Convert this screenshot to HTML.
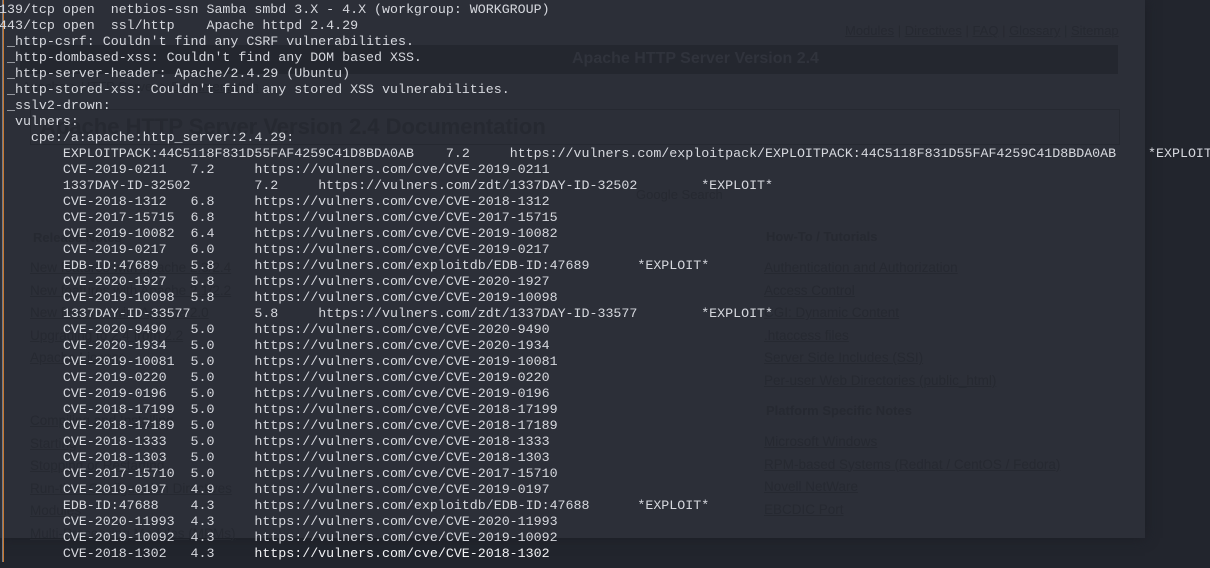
<!DOCTYPE html>
<html><head><meta charset="utf-8"><style>
html,body{margin:0;padding:0;width:1210px;height:568px;overflow:hidden;background:#22252d;font-family:"Liberation Sans",sans-serif}
.win{position:absolute;left:0;top:0;width:1145px;height:538px;background:#2c2f38;box-shadow:0 0 12px #1c1e25}
.bg{position:absolute;color:#262931;white-space:nowrap}
.bg u{text-decoration:underline}
.hdr{position:absolute;left:20px;top:45px;width:1098px;height:29px;background:#24272f}
.box{position:absolute;left:30px;top:109px;width:1088px;height:34px;border:1px solid #262931}
.lbar1{position:absolute;left:2px;top:0;width:1px;height:562px;background:#7a7c82}
.lbar2{position:absolute;left:3px;top:0;width:1px;height:562px;background:#c8772e}
pre{position:absolute;left:-1px;top:2px;margin:0;font-family:"Liberation Mono",monospace;font-size:13.3px;line-height:16px;color:#d6d8de;tab-size:8;-moz-tab-size:8;white-space:pre}
.b{color:#f2f3f5}
</style></head><body>
<div class="win"></div>
<div class="hdr"></div>
<div class="bg" style="left:572px;top:50px;font-size:16px;font-weight:bold;color:#30333c">Apache HTTP Server Version 2.4</div>
<div class="bg" style="left:845px;top:23px;font-size:13px"><u>Modules</u> | <u>Directives</u> | <u>FAQ</u> | <u>Glossary</u> | <u>Sitemap</u></div>
<div class="bg" style="left:22px;top:79px;font-size:13px">Apache &gt; HTTP Server &gt; <u>Documentation</u></div>
<div class="box"></div>
<div class="bg" style="left:40px;top:114px;font-size:22px;font-weight:bold">Apache HTTP Server Version 2.4 Documentation</div>
<div class="bg" style="left:636px;top:187px;font-size:13px">Google Search</div>
<div class="bg" style="left:33px;top:230px;font-size:13px;font-weight:bold">Release Notes</div>
<div class="bg" style="left:766px;top:229px;font-size:13px;font-weight:bold">How-To / Tutorials</div>
<div class="bg" style="left:30px;top:257px;font-size:13.5px;line-height:22.5px"><u>New features with Apache 2.3/2.4</u><br><u>New features with Apache 2.1/2.2</u><br><u>New features with Apache 2.0</u><br><u>Upgrading to 2.4 from 2.2</u><br><u>Apache License</u></div>
<div class="bg" style="left:764px;top:257px;font-size:13.5px;line-height:22.5px"><u>Authentication and Authorization</u><br><u>Access Control</u><br><u>CGI: Dynamic Content</u><br><u>.htaccess files</u><br><u>Server Side Includes (SSI)</u><br><u>Per-user Web Directories (public_html)</u></div>
<div class="bg" style="left:766px;top:403px;font-size:13px;font-weight:bold">Platform Specific Notes</div>
<div class="bg" style="left:764px;top:431px;font-size:13.5px;line-height:22.5px"><u>Microsoft Windows</u><br><u>RPM-based Systems (Redhat / CentOS / Fedora)</u><br><u>Novell NetWare</u><br><u>EBCDIC Port</u></div>
<div class="bg" style="left:30px;top:410px;font-size:13.5px;line-height:22.5px"><u>Compiling and Installing</u><br><u>Starting</u><br><u>Stopping or Restarting</u><br><u>Run-time Configuration Directives</u><br><u>Modules</u><br><u>Multi-Processing Modules (MPMs)</u></div>
<div class="lbar1"></div><div class="lbar2"></div>
<pre>139/tcp open  netbios-ssn Samba smbd 3.X - 4.X (workgroup: WORKGROUP)
443/tcp open  ssl/http    Apache httpd 2.4.29
 _http-csrf: Couldn't find any CSRF vulnerabilities.
 _http-dombased-xss: Couldn't find any DOM based XSS.
 _http-server-header: Apache/2.4.29 (Ubuntu)
 _http-stored-xss: Couldn't find any stored XSS vulnerabilities.
 _sslv2-drown: 
  vulners: 
    cpe:/a:apache:http_server:2.4.29: 
        EXPLOITPACK:44C5118F831D55FAF4259C41D8BDA0AB	7.2	https://vulners.com/exploitpack/EXPLOITPACK:44C5118F831D55FAF4259C41D8BDA0AB	*EXPLOIT*
        CVE-2019-0211	7.2	https://vulners.com/cve/CVE-2019-0211
        1337DAY-ID-32502	7.2	https://vulners.com/zdt/1337DAY-ID-32502	*EXPLOIT*
        CVE-2018-1312	6.8	https://vulners.com/cve/CVE-2018-1312
        CVE-2017-15715	6.8	https://vulners.com/cve/CVE-2017-15715
        CVE-2019-10082	6.4	https://vulners.com/cve/CVE-2019-10082
        CVE-2019-0217	6.0	https://vulners.com/cve/CVE-2019-0217
        EDB-ID:47689	5.8	https://vulners.com/exploitdb/EDB-ID:47689	*EXPLOIT*
        CVE-2020-1927	5.8	https://vulners.com/cve/CVE-2020-1927
        CVE-2019-10098	5.8	https://vulners.com/cve/CVE-2019-10098
        1337DAY-ID-33577	5.8	https://vulners.com/zdt/1337DAY-ID-33577	*EXPLOIT*
        CVE-2020-9490	5.0	https://vulners.com/cve/CVE-2020-9490
        CVE-2020-1934	5.0	https://vulners.com/cve/CVE-2020-1934
        CVE-2019-10081	5.0	https://vulners.com/cve/CVE-2019-10081
        CVE-2019-0220	5.0	https://vulners.com/cve/CVE-2019-0220
        CVE-2019-0196	5.0	https://vulners.com/cve/CVE-2019-0196
        CVE-2018-17199	5.0	https://vulners.com/cve/CVE-2018-17199
        CVE-2018-17189	5.0	https://vulners.com/cve/CVE-2018-17189
        CVE-2018-1333	5.0	https://vulners.com/cve/CVE-2018-1333
        CVE-2018-1303	5.0	https://vulners.com/cve/CVE-2018-1303
        CVE-2017-15710	5.0	https://vulners.com/cve/CVE-2017-15710
        CVE-2019-0197	4.9	https://vulners.com/cve/CVE-2019-0197
        EDB-ID:47688	4.3	https://vulners.com/exploitdb/EDB-ID:47688	*EXPLOIT*
        CVE-2020-11993	4.3	https://vulners.com/cve/CVE-2020-11993
        CVE-2019-10092	4.3	https://vulners.com/cve/CVE-2019-10092
        CVE-2018-1302	4.3	<span class="b">https://vulners.com/cve/CVE-2018-1302</span></pre>
</body></html>
